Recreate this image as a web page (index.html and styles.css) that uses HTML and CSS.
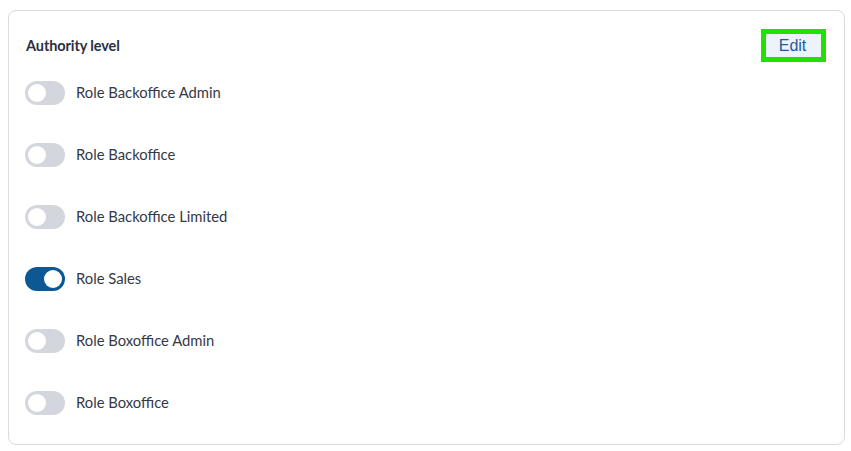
FILE: index.html
```html
<!DOCTYPE html>
<html lang="en">
<head>
<meta charset="utf-8">
<link rel="stylesheet" href="styles.css">
</head>
<body>
<section class="card">
  <div class="card-header">
    <h2 class="title">Authority level</h2>
    <button class="edit-btn"><span class="edit-inner">Edit</span></button>
  </div>
  <ul class="roles">
    <li class="role"><span class="toggle"><span class="knob"></span></span><span class="label">Role Backoffice Admin</span></li>
    <li class="role"><span class="toggle"><span class="knob"></span></span><span class="label">Role Backoffice</span></li>
    <li class="role"><span class="toggle"><span class="knob"></span></span><span class="label">Role Backoffice Limited</span></li>
    <li class="role"><span class="toggle on"><span class="knob"></span></span><span class="label">Role Sales</span></li>
    <li class="role"><span class="toggle"><span class="knob"></span></span><span class="label">Role Boxoffice Admin</span></li>
    <li class="role"><span class="toggle"><span class="knob"></span></span><span class="label">Role Boxoffice</span></li>
  </ul>
</section>
</body>
</html>
```

FILE: styles.css
```css
html, body {
  margin: 0;
  padding: 0;
  background: #ffffff;
}
body {
  padding: 10px 6px 6px 8px;
  font-family: Lato, "Open Sans", sans-serif;
}
.card {
  box-sizing: border-box;
  width: 837px;
  height: 435px;
  border: 1px solid #d8dbe0;
  border-radius: 8px;
  padding: 18px 18px 0 16px;
  display: flex;
  flex-direction: column;
}
.card-header {
  display: flex;
  justify-content: space-between;
  align-items: center;
  height: 33px;
}
.title {
  margin: 0 0 0 1px;
  font-size: 14.5px;
  font-weight: 700;
  color: #2b3040;
  letter-spacing: -0.1px;
}
.edit-btn {
  width: 65px;
  height: 33px;
  border: 5px solid #22e000;
  background: #ffffff;
  padding: 0;
  margin: 0;
  display: flex;
  align-items: stretch;
  justify-content: stretch;
  cursor: pointer;
}
.edit-inner {
  flex: 1;
  background: #edf3fa;
  color: #1b5b99;
  font-family: "Liberation Sans", Arial, sans-serif;
  font-size: 16px;
  line-height: 23px;
  text-align: center;
  padding-right: 2px;
}
.roles {
  list-style: none;
  margin: 19px 0 0 0;
  padding: 0;
  display: flex;
  flex-direction: column;
  gap: 38px;
}
.role {
  display: flex;
  align-items: center;
  height: 24px;
}
.toggle {
  position: relative;
  width: 40px;
  height: 24px;
  border-radius: 12px;
  background: #d3d6dc;
  flex: none;
}
.toggle .knob {
  position: absolute;
  top: 3px;
  left: 3px;
  width: 18px;
  height: 18px;
  border-radius: 50%;
  background: #ffffff;
}
.toggle.on {
  background: #0b5894;
}
.toggle.on .knob {
  left: 19px;
}
.label {
  margin-left: 11px;
  margin-bottom: 3px;
  font-size: 14.8px;
  color: #343946;
  line-height: 20px;
}
```
